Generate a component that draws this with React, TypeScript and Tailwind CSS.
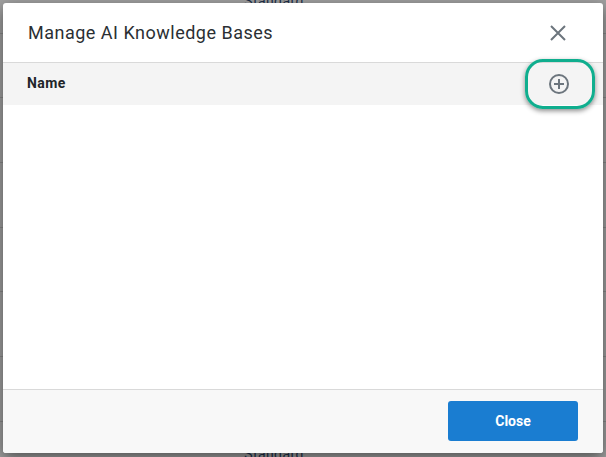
const backdropRows = [0, 1, 2, 3, 4, 5, 6, 7]

export default function App() {
  return (
    <div className="relative h-[457px] w-[606px] overflow-hidden bg-[#a1a1a1] font-['Roboto',sans-serif]">
      {/* page behind the modal, only slivers of it show */}
      <div className="absolute inset-x-0 top-[-31px] flex flex-col">
        {backdropRows.map((row) => (
          <div key={row} className="flex h-[64.7px] shrink-0 items-center justify-center border-b border-[#8a8a8a] pt-[1px]">
            <span className="ml-[-58px] text-[14px] tracking-[0.4px] text-[#1c2f4a]">Standard</span>
          </div>
        ))}
      </div>

      <div className="absolute left-[3px] top-[3px] flex h-[450px] w-[600px] flex-col rounded-[3px] bg-white shadow-[0_5px_15px_rgba(0,0,0,0.5)]">
        <header className="flex h-[60px] items-center justify-between border-b border-[#d9d9d9] pl-[25px] pr-[37px]">
          <h1 className="text-[18px] tracking-[0.5px] text-[#2b2f33]">Manage AI Knowledge Bases</h1>
          <svg width="16" height="16" viewBox="0 0 16 16" fill="none" stroke="#6c757d" strokeWidth="2">
            <path d="M1 1l14 14M15 1L1 15" />
          </svg>
        </header>
        <div className="flex h-[42px] items-center justify-between bg-[#f4f4f4] pl-[24px] pr-[8px]">
          <span className="mb-[1px] text-[14px] font-bold tracking-[0.4px] text-[#212529]">Name</span>
          <div className="flex h-[50px] w-[70px] items-center justify-center rounded-[18px] border-[3px] border-[#0fae8e] shadow-[0_2px_5px_rgba(0,0,0,0.45)]">
            <svg width="20" height="20" viewBox="0 0 20 20" fill="none" stroke="#6c757d" strokeWidth="2" className="mr-[2px]">
              <circle cx="10" cy="10" r="9" />
              <path d="M10 5v10M5 10h10" />
            </svg>
          </div>
        </div>
        <div className="flex-1" />
        <footer className="flex h-[64px] items-center justify-end rounded-b-[3px] border-t border-[#d9d9d9] bg-[#f8f8f8] pb-[1px] pr-[25px]">
          <button type="button" className="h-[40px] w-[130px] rounded-[3px] bg-[#1a7dd1] text-[14px] font-bold text-white">
            Close
          </button>
        </footer>
      </div>
    </div>
  )
}
